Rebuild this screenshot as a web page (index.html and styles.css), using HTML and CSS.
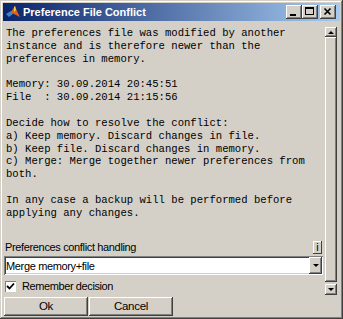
FILE: index.html
```html
<!DOCTYPE html>
<html lang="en">
<head>
    <meta charset="UTF-8">
    <title>Preference File Conflict</title>
    <link rel="stylesheet" href="styles.css">
</head>
<body>
    <div class="window">
        <header class="titlebar">
            <svg class="app-icon" width="16" height="16" viewBox="0 0 16 16">
                <polygon points="1,10 6,7 9,9 4,13" fill="#3d86c6"/>
                <polygon points="6,8 10,2 12,7 15,13 9,10" fill="#e2601a"/>
                <polygon points="9,3 10,2 11,6 9,8" fill="#f6c84c"/>
            </svg>
            <span class="title">Preference File Conflict</span>
            <div class="caption-buttons">
                <span class="cap-btn">
                    <svg width="16" height="14" viewBox="0 0 16 14"><rect x="4" y="9" width="6" height="2" fill="#000"/></svg>
                </span>
                <span class="cap-btn">
                    <svg width="16" height="14" viewBox="0 0 16 14"><rect x="3.5" y="2.5" width="8" height="7" fill="none" stroke="#000"/><rect x="3" y="2" width="9" height="2" fill="#000"/></svg>
                </span>
                <span class="cap-btn close">
                    <svg width="16" height="14" viewBox="0 0 16 14"><path d="M4.5 3.5 L10.5 9.5 M10.5 3.5 L4.5 9.5" stroke="#000" stroke-width="1.6"/></svg>
                </span>
            </div>
        </header>

        <div class="client">
            <div class="content">
                <pre class="message">The preferences file was modified by another
instance and is therefore newer than the
preferences in memory.

Memory: 30.09.2014 20:45:51
File  : 30.09.2014 21:15:56

Decide how to resolve the conflict:
a) Keep memory. Discard changes in file.
b) Keep file. Discard changes in memory.
c) Merge: Merge together newer preferences from
both.

In any case a backup will be performed before
applying any changes.</pre>

                <div class="field-head">
                    <span class="field-label">Preferences conflict handling</span>
                    <span class="info-btn">i</span>
                </div>

                <div class="combo">
                    <span class="combo-value">Merge memory+file</span>
                    <span class="combo-btn"><span class="arrow-down"></span></span>
                </div>

                <label class="check-row">
                    <span class="check-box">
                        <svg width="9" height="9" viewBox="0 0 9 9"><path d="M1 4 L3.5 6.5 L8 1.5" fill="none" stroke="#000" stroke-width="1.8"/></svg>
                    </span>
                    Remember decision
                </label>

                <div class="actions">
                    <span class="btn">Ok</span>
                    <span class="btn">Cancel</span>
                </div>
            </div>

            <div class="scrollbar">
                <span class="sb-btn"><span class="arrow-up"></span></span>
                <span class="sb-thumb"></span>
                <span class="sb-btn down"><span class="arrow-down"></span></span>
            </div>
        </div>
    </div>
</body>
</html>
```

FILE: styles.css
```css
/* Global */
body {
    margin: 0;
    background-color: #d4d0c8;
    font-family: "Liberation Sans", Arial, sans-serif;
    color: #000;
}

/* Window frame */
.window {
    width: 343px;
    height: 319px;
    box-sizing: border-box;
    padding: 3px;
    display: flex;
    flex-direction: column;
    background-color: #d4d0c8;
    box-shadow: inset -1px -1px #404040, inset 1px 1px #d4d0c8,
                inset -2px -2px #808080, inset 2px 2px #fff;
}

/* Title bar */
.titlebar {
    height: 18px;
    margin-bottom: 1px;
    padding: 0 4px 0 2px;
    display: flex;
    align-items: center;
    background: linear-gradient(to right, #0a246a, #a6caf0);
}

.app-icon {
    flex: none;
}

.title {
    margin-left: 2px;
    flex: 1;
    color: #fff;
    font-size: 11px;
    font-weight: bold;
    white-space: nowrap;
}

.caption-buttons {
    display: flex;
}

.cap-btn {
    width: 16px;
    height: 14px;
    display: block;
    background-color: #d4d0c8;
    box-shadow: inset -1px -1px #404040, inset 1px 1px #fff,
                inset -2px -2px #808080, inset 2px 2px #d4d0c8;
}

.cap-btn svg {
    display: block;
}

.cap-btn.close {
    margin-left: 2px;
}

/* Client area */
.client {
    flex: 1;
    display: flex;
    padding-left: 1px;
}

.content {
    flex: 1;
    display: flex;
    flex-direction: column;
    padding-top: 5px;
}

.message {
    margin: 0;
    height: 213px;
    padding-left: 2px;
    font-family: "Liberation Mono", "Courier New", monospace;
    font-size: 10.6px;
    line-height: 12.85px;
    white-space: pre;
}

.field-head {
    height: 15px;
    display: flex;
    justify-content: space-between;
    align-items: flex-start;
}

.field-label {
    padding-left: 1px;
    font-size: 11px;
    letter-spacing: -0.35px;
    line-height: 14px;
}

.info-btn {
    width: 9px;
    height: 13px;
    margin-top: 1px;
    margin-right: 1px;
    font-size: 11px;
    line-height: 13px;
    text-align: center;
    box-shadow: inset -1px -1px #404040, inset 1px 1px #fff;
}

/* Combo box */
.combo {
    height: 19px;
    margin-top: 1px;
    display: flex;
    align-items: center;
    background-color: #fff;
    box-shadow: inset 1px 1px #808080, inset -1px -1px #fff,
                inset 2px 2px #404040, inset -2px -2px #d4d0c8;
}

.combo-value {
    flex: 1;
    padding-left: 2px;
    font-size: 11px;
    letter-spacing: -0.35px;
}

.combo-btn {
    width: 13px;
    height: 17px;
    margin-right: 1px;
    display: flex;
    align-items: center;
    justify-content: center;
    background-color: #d4d0c8;
    box-shadow: inset -1px -1px #404040, inset 1px 1px #fff,
                inset -2px -2px #808080;
}

.arrow-down,
.arrow-up {
    width: 0;
    height: 0;
    border-left: 3px solid transparent;
    border-right: 3px solid transparent;
}

.arrow-down {
    border-top: 3px solid #000;
}

.arrow-up {
    border-bottom: 3px solid #000;
}

/* Checkbox */
.check-row {
    height: 22px;
    padding-left: 1px;
    display: flex;
    align-items: center;
    gap: 6px;
    font-size: 11px;
    letter-spacing: -0.4px;
}

.check-box {
    width: 11px;
    height: 11px;
    box-sizing: border-box;
    display: flex;
    align-items: center;
    justify-content: center;
    background-color: #fff;
    box-shadow: inset 1px 1px #808080, inset -1px -1px #fff;
}

.check-box svg {
    display: block;
}

/* Buttons */
.actions {
    display: flex;
    gap: 1px;
}

.btn {
    width: 84px;
    height: 19px;
    font-size: 11.5px;
    letter-spacing: -0.3px;
    line-height: 19px;
    text-align: center;
    box-shadow: inset -1px -1px #404040, inset 1px 1px #fff,
                inset -2px -2px #808080;
}

/* Scrollbar */
.scrollbar {
    width: 12px;
    height: 268px;
    margin: 5px 3px 0 2px;
    display: flex;
    flex-direction: column;
}

.sb-btn {
    height: 10px;
    display: flex;
    align-items: center;
    justify-content: center;
    box-shadow: inset -1px -1px #404040, inset 1px 1px #fff,
                inset -2px -2px #808080;
}

.sb-btn.down {
    height: 11px;
    margin-top: 2px;
}

.sb-thumb {
    flex: 1;
    box-shadow: inset -1px -1px #404040, inset 1px 1px #fff,
                inset -2px -2px #808080;
}
```
